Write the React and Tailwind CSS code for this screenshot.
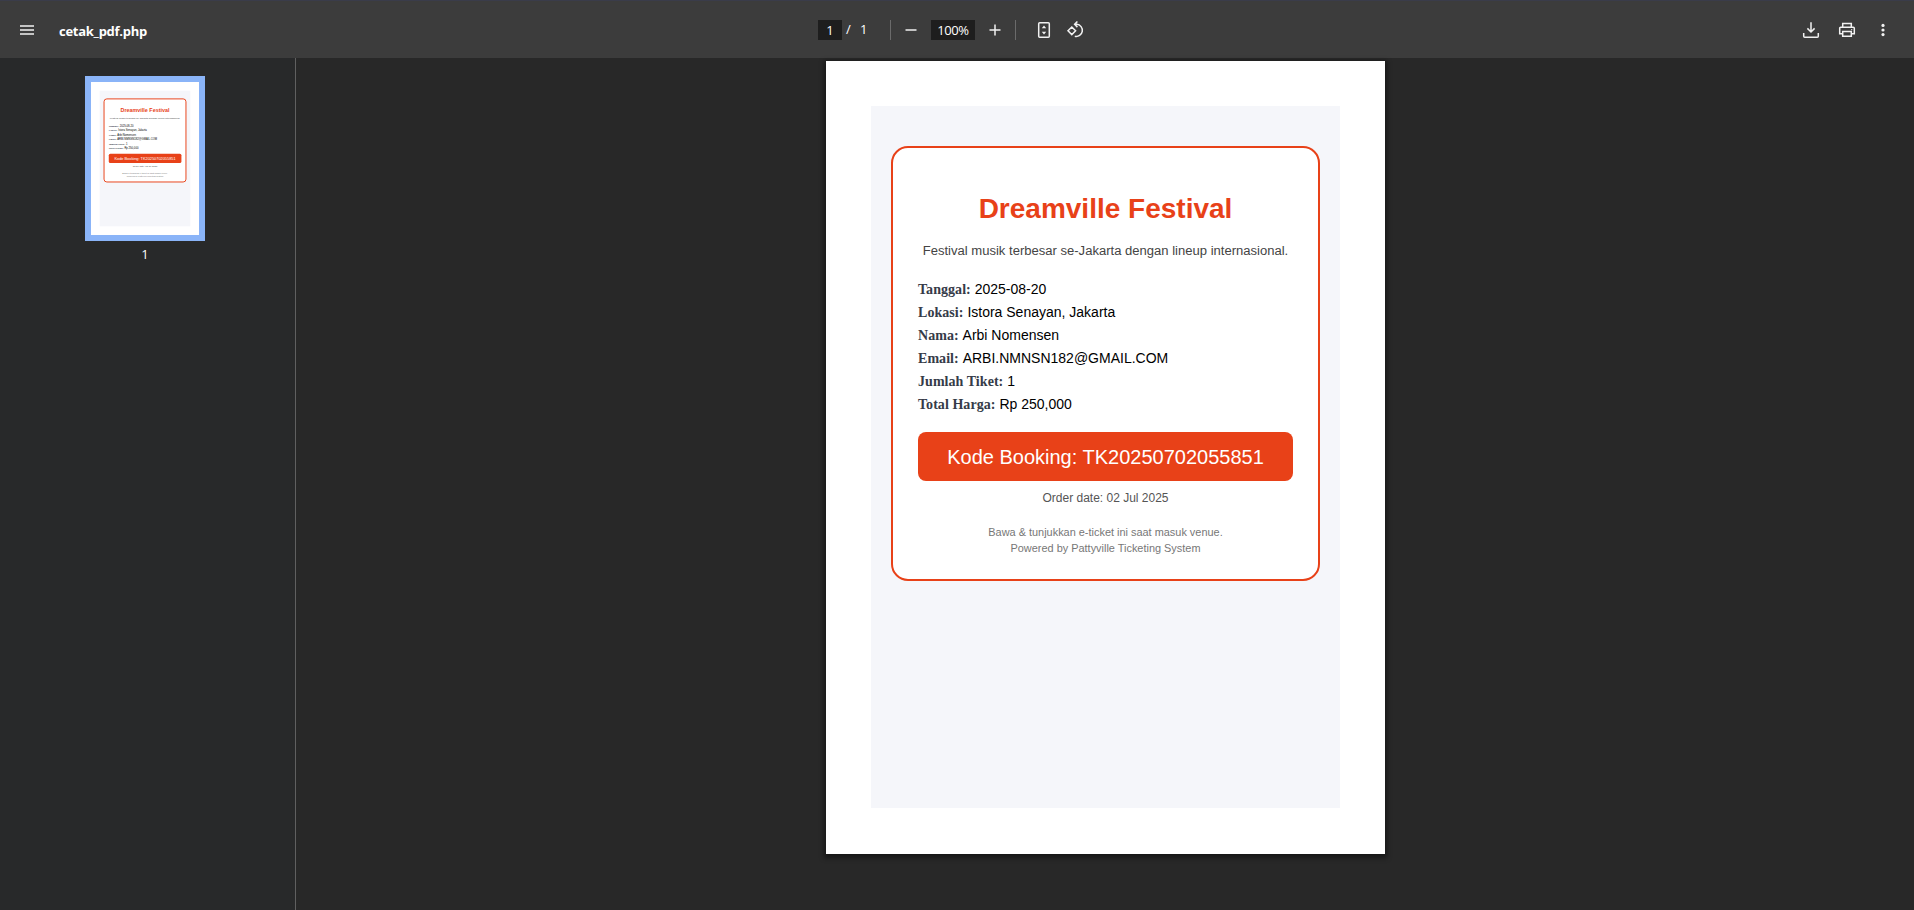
const rows = [
  ['Tanggal:', '2025-08-20'],
  ['Lokasi:', 'Istora Senayan, Jakarta'],
  ['Nama:', 'Arbi Nomensen'],
  ['Email:', 'ARBI.NMNSN182@GMAIL.COM'],
  ['Jumlah Tiket:', '1'],
  ['Total Harga:', 'Rp 250,000'],
];

function TicketPage({ thumbnail = false }) {
  const frame = thumbnail ? 'border-[5.5px] px-[21.5px] pt-[40.5px]' : 'border-[2px] px-[25px] pt-[44px]';
  return (
    <div className="h-[793px] w-[559px] shrink-0 bg-white p-[45px] font-['Liberation_Sans',Arial,sans-serif]">
      <div className="h-[702px] w-[469px] bg-[#f5f6fa] px-5 pt-[40.3px]">
        <div className={`flex h-[435.2px] w-[429px] flex-col items-center rounded-[17px] border-[#e84118] bg-white ${frame}`}>
          <h1 className="h-[34px] text-[28px] leading-[34px] font-bold whitespace-nowrap text-[#e84118]">Dreamville Festival</h1>
          <p className="mt-[17px] h-4 text-[13.05px] leading-4 whitespace-nowrap text-[#444444]">
            Festival musik terbesar se-Jakarta dengan lineup internasional.
          </p>
          <dl className="mt-[19px] w-full">
            {rows.map(([label, value]) => (
              <div key={label} className="flex h-[23px] items-baseline gap-[3.9px] leading-[23px] whitespace-nowrap">
                <dt className="font-['Liberation_Serif',serif] text-[14px] font-bold tracking-[0.05px] text-[#353b48]">{label}</dt>
                <dd className="text-[14px] text-black">{value}</dd>
              </div>
            ))}
          </dl>
          <div className="mt-[16px] flex h-[48.6px] w-full shrink-0 items-center justify-center rounded-lg bg-[#e84118] text-[20px] whitespace-nowrap text-white">
            Kode Booking: TK20250702055851
          </div>
          <p className="mt-[9.4px] h-4 text-[12px] leading-4 whitespace-nowrap text-[#555555]">Order date: 02 Jul 2025</p>
          <div className="mt-[18px] text-center text-[10.93px] leading-4 whitespace-nowrap text-[#777777]">
            <p>Bawa &amp; tunjukkan e-ticket ini saat masuk venue.</p>
            <p>Powered by Pattyville Ticketing System</p>
          </div>
        </div>
      </div>
    </div>
  );
}

function Icon({ children, className = '' }) {
  return (
    <svg viewBox="0 0 20 20" className={`h-5 w-5 shrink-0 ${className}`} fill="none" stroke="#f1f1f1" strokeWidth="1.5">
      {children}
    </svg>
  );
}

function Toolbar() {
  return (
    <header className="flex h-[58px] shrink-0 items-center border-t border-[#3a3c4a] bg-[#3c3c3c] pt-[1px] font-['Open_Sans','Noto_Sans',sans-serif] text-white">
      <div className="flex w-[818px] items-center">
        <Icon className="ml-[17px]">
          <path d="M3 6h14M3 10h14M3 14h14" />
        </Icon>
        <span className="ml-[22px] pt-[2px] text-[13px] leading-5 font-bold tracking-[-0.27px]">cetak_pdf.php</span>
      </div>
      <div className="flex items-center text-[13px] font-medium">
        <span className="h-5 w-6 bg-[#1e1e1e] text-center leading-5">1</span>
        <span className="ml-[4px] w-2">/</span>
        <span className="ml-[6px] w-2">1</span>
        <span className="ml-[22px] h-5 w-px bg-[#6b6b6b]" />
        <Icon className="ml-[10px]">
          <path d="M4.5 10h11" />
        </Icon>
        <span className="ml-[10px] h-5 w-11 bg-[#1e1e1e] text-center leading-5 tracking-[-0.4px]">100%</span>
        <Icon className="ml-[10px]">
          <path d="M4.5 10h11M10 4.5v11" />
        </Icon>
        <span className="ml-[10px] h-5 w-px bg-[#6b6b6b]" />
        <Icon className="ml-[18px]">
          <rect x="4.7" y="2.7" width="10.6" height="14.6" rx="1" />
          <path d="M7.8 8.2L10 5.6l2.2 2.6zM7.8 11.8L10 14.4l2.2-2.6z" fill="#f1f1f1" stroke="none" />
        </Icon>
        <Icon className="ml-[12px]">
          <path d="M2 10.8l3.8-3.8 3.8 3.8-3.8 3.8zM9.2 4.3h1.6a6.1 6.1 0 1 1-2 12M11.4 1.4L8.6 4.3l2.8 2.8" />
        </Icon>
      </div>
      <div className="ml-auto flex items-center gap-4 pr-[21px]">
        <Icon>
          <path d="M10 2.2v9.6M6.4 8.4L10 12l3.6-3.6M2.7 13v3.2a1 1 0 0 0 1 1h12.6a1 1 0 0 0 1-1V13" />
        </Icon>
        <Icon>
          <path d="M5.7 7V3.5h8.6V7M5.5 13.7H2.7V8.2a1 1 0 0 1 1-1h12.6a1 1 0 0 1 1 1v5.5h-2.8M5.7 11.5h8.6v4.8H5.7z" />
          <circle cx="14.7" cy="9.6" r="0.7" fill="#f1f1f1" stroke="none" />
        </Icon>
        <Icon>
          <g fill="#f1f1f1" stroke="none">
            <circle cx="10" cy="5.4" r="1.6" />
            <circle cx="10" cy="10" r="1.6" />
            <circle cx="10" cy="14.6" r="1.6" />
          </g>
        </Icon>
      </div>
    </header>
  );
}

export default function App() {
  return (
    <div className="flex h-[910px] w-[1914px] flex-col overflow-hidden bg-[#282828]">
      <Toolbar />
      <div className="flex min-h-0 flex-1">
        <aside className="flex w-[296px] shrink-0 flex-col items-center border-r border-[#606060] bg-[#28292a] pt-[18px] pr-[5px]">
          <div className="h-[165px] w-[120px] border-[6px] border-[#8ab4f8] bg-white">
            <div className="h-[153px] w-[108px] overflow-hidden">
              <div className="w-[559px] origin-top-left scale-[0.1932]">
                <TicketPage thumbnail />
              </div>
            </div>
          </div>
          <span className="mt-[3px] font-['Open_Sans','Noto_Sans',sans-serif] text-[13px] leading-5 font-medium text-white">1</span>
        </aside>
        <main className="min-w-0 flex-1 pt-[3px] pl-[530px]">
          <div className="w-[559px] shadow-[0_2px_5px_2px_rgba(0,0,0,0.45)]">
            <TicketPage />
          </div>
        </main>
      </div>
    </div>
  );
}
